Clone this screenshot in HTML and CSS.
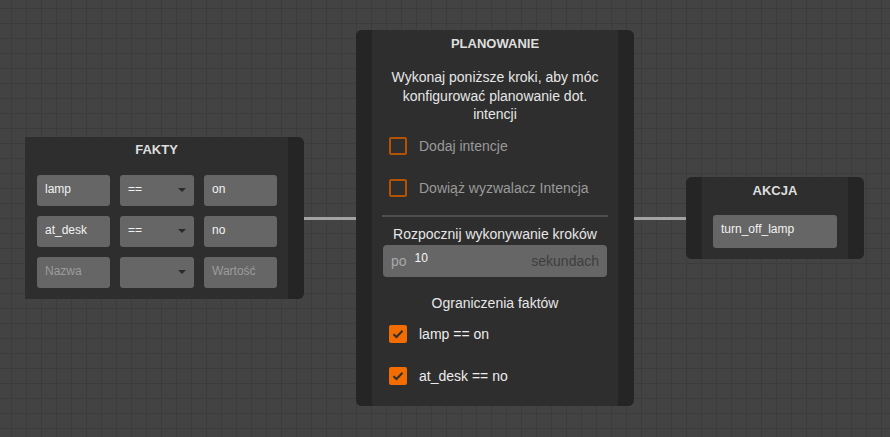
FILE: index.html
```html
<!DOCTYPE html>
<html lang="pl">
<head>
    <meta charset="UTF-8">
    <title>Planowanie</title>
    <link rel="stylesheet" href="styles.css">
</head>
<body>
    <div class="canvas">
        <div class="wire wire-left"></div>
        <div class="wire wire-right"></div>

        <!-- węzeł faktów -->
        <div class="node node-facts">
            <div class="node-body">
                <div class="node-title">FAKTY</div>
                <div class="facts-grid">
                    <div class="field">lamp</div>
                    <div class="field select">==<span class="caret"></span></div>
                    <div class="field">on</div>

                    <div class="field">at_desk</div>
                    <div class="field select">==<span class="caret"></span></div>
                    <div class="field">no</div>

                    <div class="field placeholder">Nazwa</div>
                    <div class="field select"><span class="caret"></span></div>
                    <div class="field placeholder">Wartość</div>
                </div>
            </div>
            <div class="strip"></div>
        </div>

        <!-- węzeł planowania -->
        <div class="node node-plan">
            <div class="strip"></div>
            <div class="node-body">
                <div class="node-title">PLANOWANIE</div>
                <p class="desc">Wykonaj poniższe kroki, aby móc konfigurować planowanie dot. intencji</p>

                <div class="option first">
                    <span class="box"></span>
                    <span class="option-label muted">Dodaj intencje</span>
                </div>
                <div class="option">
                    <span class="box"></span>
                    <span class="option-label muted">Dowiąż wyzwalacz Intencja</span>
                </div>

                <div class="divider"></div>

                <div class="sub-title start">Rozpocznij wykonywanie kroków</div>
                <div class="delay">
                    <span class="delay-pre">po</span>
                    <span class="delay-value">10</span>
                    <span class="delay-post">sekundach</span>
                </div>

                <div class="sub-title limits">Ograniczenia faktów</div>
                <div class="option first-limit">
                    <span class="box checked">
                        <svg width="12" height="10" viewBox="0 0 12 10"><path d="M1.5 5.2 L4.5 8 L10.5 1.8" fill="none" stroke="#2e2e2e" stroke-width="2"/></svg>
                    </span>
                    <span class="option-label">lamp == on</span>
                </div>
                <div class="option">
                    <span class="box checked">
                        <svg width="12" height="10" viewBox="0 0 12 10"><path d="M1.5 5.2 L4.5 8 L10.5 1.8" fill="none" stroke="#2e2e2e" stroke-width="2"/></svg>
                    </span>
                    <span class="option-label">at_desk == no</span>
                </div>
            </div>
            <div class="strip"></div>
        </div>

        <!-- węzeł akcji -->
        <div class="node node-action">
            <div class="strip"></div>
            <div class="node-body">
                <div class="node-title">AKCJA</div>
                <div class="field action-field">turn_off_lamp</div>
            </div>
            <div class="strip"></div>
        </div>
    </div>
</body>
</html>
```

FILE: styles.css
```css
html, body {
    margin: 0;
    padding: 0;
}
body {
    font-family: "Liberation Sans", Arial, sans-serif;
    background-color: #434343;
    color: #e8e8e8;
}
.canvas {
    position: relative;
    width: 890px;
    height: 437px;
    overflow: hidden;
    background-color: #434343;
    background-image:
        linear-gradient(to right, #3c3c3c 1px, transparent 1px),
        linear-gradient(to bottom, #3c3c3c 1px, transparent 1px);
    background-size: 15px 15px;
    background-position: 11px 8px;
}
.wire {
    position: absolute;
    top: 217px;
    height: 3px;
    background: #a3a3a3;
}
.wire-left {
    left: 300px;
    width: 60px;
}
.wire-right {
    left: 630px;
    width: 60px;
}
.node {
    position: absolute;
    display: flex;
    background: #2e2e2e;
    border-radius: 6px;
    overflow: hidden;
}
.strip {
    width: 16px;
    background: #252525;
    flex-shrink: 0;
}
.node-body {
    flex: 1;
    display: flex;
    flex-direction: column;
}
.node-title {
    font-size: 13px;
    font-weight: bold;
    line-height: 16px;
    text-align: center;
    color: #dedede;
    padding-top: 6px;
}

/* fakty */
.node-facts {
    left: 25px;
    top: 137px;
    width: 279px;
    height: 162px;
    border-radius: 0 6px 6px 0;
}
.node-facts .node-title {
    padding-top: 5px;
}
.facts-grid {
    display: grid;
    grid-template-columns: 73px 74px 73px;
    grid-auto-rows: 31px;
    gap: 10px;
    margin: 17px 0 0 12px;
}
.field {
    position: relative;
    background: #666;
    border-radius: 3px;
    font-size: 12px;
    line-height: 28px;
    padding-left: 8px;
    color: #f2f2f2;
}
.field.placeholder {
    color: #9c9c9c;
}
.caret {
    position: absolute;
    right: 8px;
    top: 13px;
    width: 0;
    height: 0;
    border-left: 4px solid transparent;
    border-right: 4px solid transparent;
    border-top: 4px solid #2a2a2a;
}

/* planowanie */
.node-plan {
    left: 356px;
    top: 30px;
    width: 278px;
    height: 376px;
}
.desc {
    margin: 16px 10px 0;
    font-size: 14px;
    line-height: 18.5px;
    text-align: center;
    color: #e6e6e6;
}
.option {
    display: flex;
    align-items: center;
    height: 18px;
    margin-top: 24px;
    padding-left: 17px;
}
.option.first {
    margin-top: 13px;
}
.option.first-limit {
    margin-top: 14px;
}
.box {
    width: 18px;
    height: 18px;
    box-sizing: border-box;
    border: 2px solid #b35200;
    border-radius: 2px;
    display: flex;
    align-items: center;
    justify-content: center;
    flex-shrink: 0;
}
.box.checked {
    background: #f26c00;
    border-color: #f26c00;
}
.option-label {
    margin-left: 12px;
    font-size: 14px;
    color: #ececec;
}
.option-label.muted {
    color: #9a9a9a;
}
.divider {
    height: 2px;
    background: #4f4f4f;
    margin: 18px 10px 0;
}
.sub-title {
    font-size: 14px;
    line-height: 16px;
    text-align: center;
    color: #e6e6e6;
}
.sub-title.start {
    margin-top: 9px;
}
.sub-title.limits {
    margin-top: 18px;
}
.delay {
    display: flex;
    align-items: center;
    height: 32px;
    margin: 3px 11px 0;
    padding: 0 8px;
    background: #666;
    border-radius: 4px;
    font-size: 14px;
}
.delay-pre {
    color: #a8a8a8;
}
.delay-value {
    margin-left: 8px;
    font-size: 12px;
    color: #f5f5f5;
    position: relative;
    top: -3px;
}
.delay-post {
    margin-left: auto;
    color: #3e3e3e;
}

/* akcja */
.node-action {
    left: 686px;
    top: 177px;
    width: 178px;
    height: 82px;
}
.action-field {
    margin: 16px 11px 0;
    height: 33px;
    line-height: 28px;
}
```
